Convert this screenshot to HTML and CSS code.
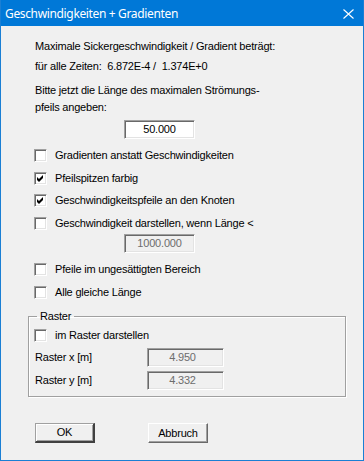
FILE: index.html
```html
<!DOCTYPE html>
<html>
<head>
<meta charset="utf-8">
<link rel="stylesheet" href="styles.css">
</head>
<body>
<div class="window">
  <div class="titlebar">
    <span class="title">Geschwindigkeiten + Gradienten</span>
    <svg class="close" width="11" height="10" viewBox="0 0 11 10"><path d="M0.5 0.5 L10.5 9.5 M10.5 0.5 L0.5 9.5" stroke="#fff" stroke-width="1.1" fill="none"/></svg>
  </div>
  <div class="content">
    <div class="text r1">Maximale Sickergeschwindigkeit / Gradient beträgt:</div>
    <div class="text r2">für alle Zeiten:&nbsp; 6.872E-4 /&nbsp; 1.374E+0</div>
    <div class="text r3">Bitte jetzt die Länge des maximalen Strömungs-</div>
    <div class="text r4">pfeils angeben:</div>
    <div class="field wide r5">50.000</div>

    <div class="check r6"><span class="box"></span><span>Gradienten anstatt Geschwindigkeiten</span></div>
    <div class="check r7"><span class="box"><svg width="9" height="9" viewBox="0 0 9 9"><path d="M1 3 L3 5 L7 1 L7 4 L3 8 L1 6 Z" fill="#000"/></svg></span><span>Pfeilspitzen farbig</span></div>
    <div class="check r8"><span class="box"><svg width="9" height="9" viewBox="0 0 9 9"><path d="M1 3 L3 5 L7 1 L7 4 L3 8 L1 6 Z" fill="#000"/></svg></span><span>Geschwindigkeitspfeile an den Knoten</span></div>
    <div class="check r9"><span class="box"></span><span>Geschwindigkeit darstellen, wenn Länge &lt;</span></div>
    <div class="field wide disabled r10">1000.000</div>
    <div class="check r11"><span class="box"></span><span>Pfeile im ungesättigten Bereich</span></div>
    <div class="check r12"><span class="box"></span><span>Alle gleiche Länge</span></div>

    <fieldset class="group">
      <legend>Raster</legend>
      <div class="check g1"><span class="box"></span><span>im Raster darstellen</span></div>
      <div class="frow g2"><span class="flabel">Raster x [m]</span><span class="field narrow disabled">4.950</span></div>
      <div class="frow g3"><span class="flabel">Raster y [m]</span><span class="field narrow disabled">4.332</span></div>
    </fieldset>

    <div class="buttons">
      <div class="btn default">OK</div>
      <div class="btn">Abbruch</div>
    </div>
  </div>
</div>
</body>
</html>
```
FILE: styles.css
```css
html, body {
  margin: 0;
  padding: 0;
  background: #f0f0f0;
}
.window {
  width: 364px;
  height: 461px;
  box-sizing: border-box;
  border: 1px solid #1a7fd4;
  border-top: none;
  background: #f0f0f0;
  font-family: "Liberation Sans", Arial, sans-serif;
  font-size: 11px;
  letter-spacing: -0.2px;
  color: #000;
  overflow: hidden;
}
.titlebar {
  height: 26px;
  margin: 0 -1px;
  background: #0078d7;
  display: flex;
  align-items: center;
  justify-content: space-between;
  padding: 0 10px 0 5px;
}
.title {
  color: #fff;
  font-family: "Noto Sans", "Open Sans", sans-serif;
  font-size: 12px;
  letter-spacing: -0.35px;
  line-height: 16px;
  padding-top: 1px;
}
.close {
  display: block;
  margin-top: 1px;
}
.content {
  display: flex;
  flex-direction: column;
  align-items: flex-start;
  padding-left: 33px;
}
.text {
  line-height: 13px;
  height: 13px;
  white-space: nowrap;
}
.r1 { margin-top: 14px; margin-left: 1px; }
.r2 { margin-top: 7px; margin-left: 1px; }
.r3 { margin-top: 11px; margin-left: 1px; }
.r4 { margin-top: 4px; margin-left: 1px; }
.r5 { margin-top: 6px; margin-left: 90px; }
.r6 { margin-top: 10px; }
.r7 { margin-top: 10px; }
.r8 { margin-top: 9px; }
.r9 { margin-top: 10px; }
.r10 { margin-top: 4px; margin-left: 90px; }
.r11 { margin-top: 10px; }
.r12 { margin-top: 10px; }

.field {
  box-sizing: border-box;
  height: 19px;
  border: 1px solid;
  border-color: #a0a0a0 #ffffff #ffffff #a0a0a0;
  box-shadow: inset 1px 1px 0 #696969, inset -1px -1px 0 #e3e3e3;
  background: #fff;
  display: flex;
  align-items: center;
  justify-content: center;
  line-height: 13px;
  color: #000;
}
.field.wide { width: 71px; }
.field.narrow { width: 77px; padding-right: 6px; }
.field.disabled {
  background: #f0f0f0;
  color: #6d6d6d;
}

.check {
  display: flex;
  align-items: center;
  height: 13px;
  line-height: 13px;
  white-space: nowrap;
}
.box {
  box-sizing: border-box;
  width: 13px;
  height: 13px;
  border: 1px solid;
  border-color: #a0a0a0 #ffffff #ffffff #a0a0a0;
  box-shadow: inset 1px 1px 0 #696969, inset -1px -1px 0 #e3e3e3;
  background: #fff;
  margin-right: 8px;
  display: flex;
  align-items: center;
  justify-content: center;
}
.box svg { display: block; }

.group {
  margin: 11px 0 0 -6px;
  padding: 0 0 6px 0;
  width: 318px;
  box-sizing: border-box;
  border: 1px solid #a0a0a0;
  box-shadow: inset 1px 1px 0 #fff, 1px 1px 0 #fff;
  min-width: 0;
}
.group legend {
  margin-left: 8px;
  padding: 0 3px;
  line-height: 13px;
  height: 13px;
}
.g1 { margin-top: 6px; margin-left: 5px; }
.frow {
  display: flex;
  align-items: center;
  margin-left: 6px;
}
.g2 { margin-top: 6px; }
.g3 { margin-top: 4px; }
.flabel {
  width: 112px;
  line-height: 13px;
  white-space: nowrap;
}

.buttons {
  display: flex;
  gap: 53px;
  margin-top: 26px;
  margin-left: 1px;
}
.btn {
  box-sizing: border-box;
  width: 60px;
  height: 20px;
  background: #f0f0f0;
  border: 1px solid;
  border-color: #ffffff #696969 #696969 #ffffff;
  box-shadow: inset -1px -1px 0 #a0a0a0;
  display: flex;
  align-items: center;
  justify-content: center;
  line-height: 13px;
}
.btn.default {
  border-width: 1px 2px 2px 1px;
  border-color: #a0a0a0 #404040 #404040 #a0a0a0;
  box-shadow: inset 1px 1px 0 #fff, inset -1px -1px 0 #a0a0a0;
}
```
